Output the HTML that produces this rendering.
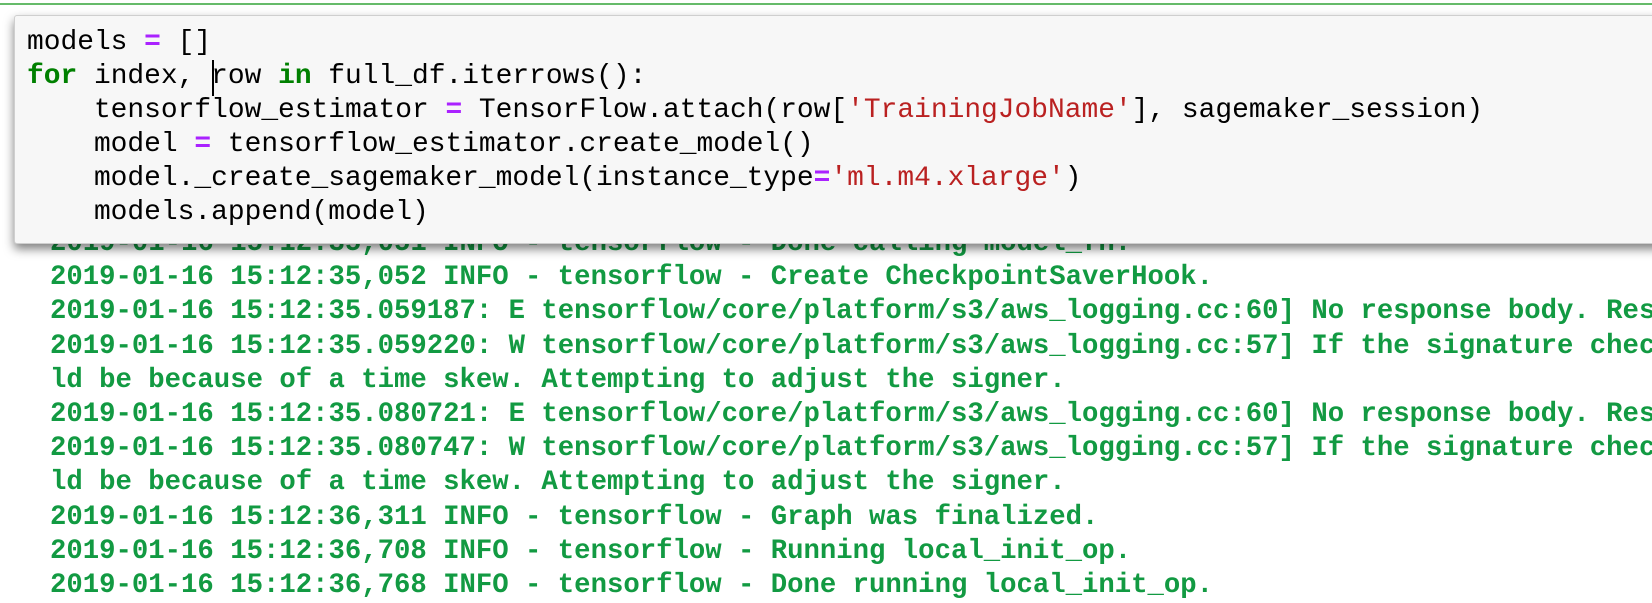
<!DOCTYPE html>
<html><head><meta charset="utf-8"><style>
html,body{margin:0;padding:0;width:1652px;height:600px;overflow:hidden;background:#fff;}
.topline{position:absolute;left:0;top:3px;width:1652px;height:2px;background:#66bb6a;}
.log{position:absolute;left:50px;top:227px;font-family:"Liberation Mono",monospace;font-size:27.3px;font-weight:bold;color:#129a42;line-height:34.2px;white-space:pre;}
.cell{position:absolute;left:14px;top:15px;width:1700px;height:227px;background:#f7f7f7;border:1px solid #cfcfcf;border-radius:3px;box-shadow:0 5px 10px rgba(0,0,0,0.5);}
.code{position:absolute;left:27px;top:26px;font-family:"Liberation Mono",monospace;font-size:27.9px;color:#000;line-height:34px;white-space:pre;}
.k{color:#008000;font-weight:bold}
.o{color:#aa22ff;font-weight:bold}
.s{color:#ba2121}
.cur{position:absolute;left:212px;top:60px;width:2px;height:36px;background:#000;}
</style></head><body>
<div class="topline"></div>
<div class="log">2019-01-16 15:12:35,051 INFO - tensorflow - Done calling model_fn.
2019-01-16 15:12:35,052 INFO - tensorflow - Create CheckpointSaverHook.
2019-01-16 15:12:35.059187: E tensorflow/core/platform/s3/aws_logging.cc:60] No response body. Response code: 404
2019-01-16 15:12:35.059220: W tensorflow/core/platform/s3/aws_logging.cc:57] If the signature check failed. This cou
ld be because of a time skew. Attempting to adjust the signer.
2019-01-16 15:12:35.080721: E tensorflow/core/platform/s3/aws_logging.cc:60] No response body. Response code: 404
2019-01-16 15:12:35.080747: W tensorflow/core/platform/s3/aws_logging.cc:57] If the signature check failed. This cou
ld be because of a time skew. Attempting to adjust the signer.
2019-01-16 15:12:36,311 INFO - tensorflow - Graph was finalized.
2019-01-16 15:12:36,708 INFO - tensorflow - Running local_init_op.
2019-01-16 15:12:36,768 INFO - tensorflow - Done running local_init_op.</div>
<div class="cell"></div>
<div class="code">models <span class="o">=</span> []
<span class="k">for</span> index, row <span class="k">in</span> full_df.iterrows():
    tensorflow_estimator <span class="o">=</span> TensorFlow.attach(row[<span class="s">'TrainingJobName'</span>], sagemaker_session)
    model <span class="o">=</span> tensorflow_estimator.create_model()
    model._create_sagemaker_model(instance_type<span class="o">=</span><span class="s">'ml.m4.xlarge'</span>)
    models.append(model)</div>
<div class="cur"></div>
</body></html>
